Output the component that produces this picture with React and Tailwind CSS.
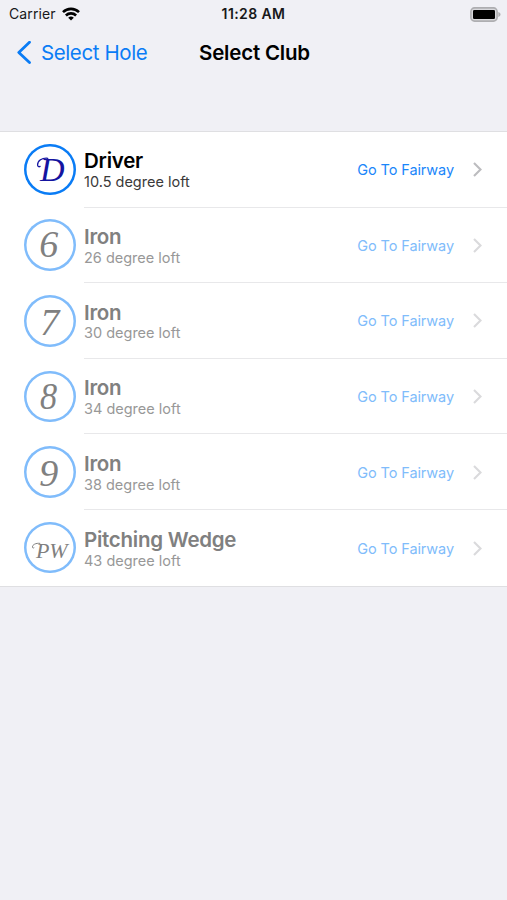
const CLUBS = [
  { mark: "D", name: "Driver", loft: "10.5 degree loft", enabled: true, markClass: "text-[34px] text-[#1414a0] translate-x-[2.5px]" },
  { mark: "6", name: "Iron", loft: "26 degree loft", markClass: "text-[38px] -translate-x-px -translate-y-px" },
  { mark: "7", name: "Iron", loft: "30 degree loft", markClass: "text-[38px] translate-y-px" },
  { mark: "8", name: "Iron", loft: "34 degree loft", markClass: "text-[38px] scale-x-90 -translate-x-px" },
  { mark: "9", name: "Iron", loft: "38 degree loft", markClass: "text-[38px] -translate-x-px translate-y-px" },
  { mark: "PW", name: "Pitching Wedge", loft: "43 degree loft", markClass: "text-[22px] translate-x-[2px] translate-y-[3px]" },
];

function WifiIcon() {
  return (
    <svg width="18" height="14" viewBox="0 0 18 14" fill="none" stroke="#000" strokeWidth="2.6">
      <path d="M1 5.1a11.5 11.5 0 0 1 16 0" />
      <path d="M3.9 8.5a7.3 7.3 0 0 1 10.2 0" />
      <path d="M9 13.6 6.2 10.8a4 4 0 0 1 5.6 0Z" fill="#000" stroke="none" />
    </svg>
  );
}

function BatteryIcon() {
  return (
    <svg width="31" height="15" viewBox="0 0 31 15">
      <rect x="0.9" y="0.9" width="26.2" height="13.2" rx="3.6" fill="#d8d8dc" stroke="#aeaeb1" strokeWidth="1.6" />
      <rect x="3" y="3" width="22" height="9" rx="1.2" fill="#000" />
      <path d="M28.3 5.1c1.6.6 2.2 1.5 2.2 2.4s-.6 1.8-2.2 2.4Z" fill="#aeaeb1" />
    </svg>
  );
}

// entry flourish to the left of the capitals
function Swash({ mark }) {
  if (mark === "D") {
    return (
      <svg className="absolute inset-0" viewBox="0 0 52 52" fill="none" stroke="#1414a0" strokeWidth="1.3" strokeLinecap="round">
        <path d="M24 14.4c-6-.5-10.300 2.400-10.300 6.600 0 1.800 1.300 2.300 2.500 1.600" />
      </svg>
    );
  }
  if (mark === "PW") {
    return (
      <svg className="absolute inset-0" viewBox="0 0 52 52" fill="none" stroke="#808080" strokeWidth="1" strokeLinecap="round">
        <path d="M16 21.500c-4-.5-7.500 1.300-7.500 3.700 0 1 .8 1.300 1.500.8" />
      </svg>
    );
  }
  return null;
}

function StatusBar() {
  return (
    <div className="grid h-7 grid-cols-3 items-center pl-[9px] pr-[6px] text-[14px] leading-none text-[#18181a]">
      <div className="flex items-center gap-[6px]">
        <span className="tracking-[0.1px]">Carrier</span>
        <WifiIcon />
      </div>
      <span className="-ml-[3px] text-center font-semibold tracking-[0.4px]">11:28 AM</span>
      <div className="flex justify-end">
        <BatteryIcon />
      </div>
    </div>
  );
}

function NavBar() {
  return (
    <div className="grid h-[49px] grid-cols-[1fr_auto_1fr] items-center pl-[17px] pr-[15px] text-[20.5px] leading-none">
      <div className="flex items-center gap-[10px] whitespace-nowrap text-[#0a7cf5]">
        <svg width="14" height="24" viewBox="0 0 14 24" fill="none" stroke="currentColor" strokeWidth="2.8" strokeLinecap="round" strokeLinejoin="round">
          <path d="M12.5 1.2 1.8 11.4l10.7 10.2" />
        </svg>
        <span className="pt-px tracking-[-0.4px]">Select Hole</span>
      </div>
      <h1 className="pt-px font-semibold tracking-[-0.2px] text-black">Select Club</h1>
      <span />
    </div>
  );
}

function ClubRow({ club, last }) {
  return (
    <li className={club.enabled ? "flex h-[75.6px] pl-6" : "flex h-[75.6px] pl-6 text-[#808080]"}>
      <div className={`relative mt-[11.8px] flex size-[51.6px] shrink-0 items-center justify-center rounded-full ${club.enabled ? "shadow-[inset_0_0_0_2.5px_#0a7cf5]" : "shadow-[inset_0_0_0_2.5px_#80bcfb]"}`}>
        <Swash mark={club.mark} />
        <span className={`font-['Liberation_Serif',serif] italic leading-none ${club.markClass}`}>{club.mark}</span>
      </div>
      <div className={`ml-[8.4px] flex flex-1 items-center ${last ? "" : "border-b border-[#e8e8ea]"}`}>
        <div className="flex flex-1 flex-col pt-[2px]">
          <span className="text-[20.5px] font-semibold leading-6 tracking-[-0.25px]">{club.name}</span>
          <span className={`-mt-[0.3px] text-[14.5px] leading-[18px] ${club.enabled ? "text-[#3a3a3a]" : "text-[#989898]"}`}>{club.loft}</span>
        </div>
        <span className={`pt-[1.6px] text-[14.5px] tracking-[-0.1px] ${club.enabled ? "text-[#1a86fa]" : "text-[#80bcfb]"}`}>Go To Fairway</span>
        <svg className="ml-[19px] mr-[25px] mt-px" width="9" height="15" viewBox="0 0 9 15" fill="none" stroke={club.enabled ? "#bcbcbf" : "#dadadc"} strokeWidth="2.1">
          <path d="M1 1l6.5 6.5L1 14" />
        </svg>
      </div>
    </li>
  );
}

export default function App() {
  return (
    <div className="flex h-[900px] w-[507px] flex-col overflow-hidden bg-[#f0f0f5] font-['Inter','Liberation_Sans',sans-serif] text-black">
      <header className="h-[131px]">
        <StatusBar />
        <NavBar />
      </header>
      <ul className="border-y border-[#dfdfe2] bg-white">
        {CLUBS.map((club, i) => (
          <ClubRow key={club.loft} club={club} last={i === CLUBS.length - 1} />
        ))}
      </ul>
    </div>
  );
}
